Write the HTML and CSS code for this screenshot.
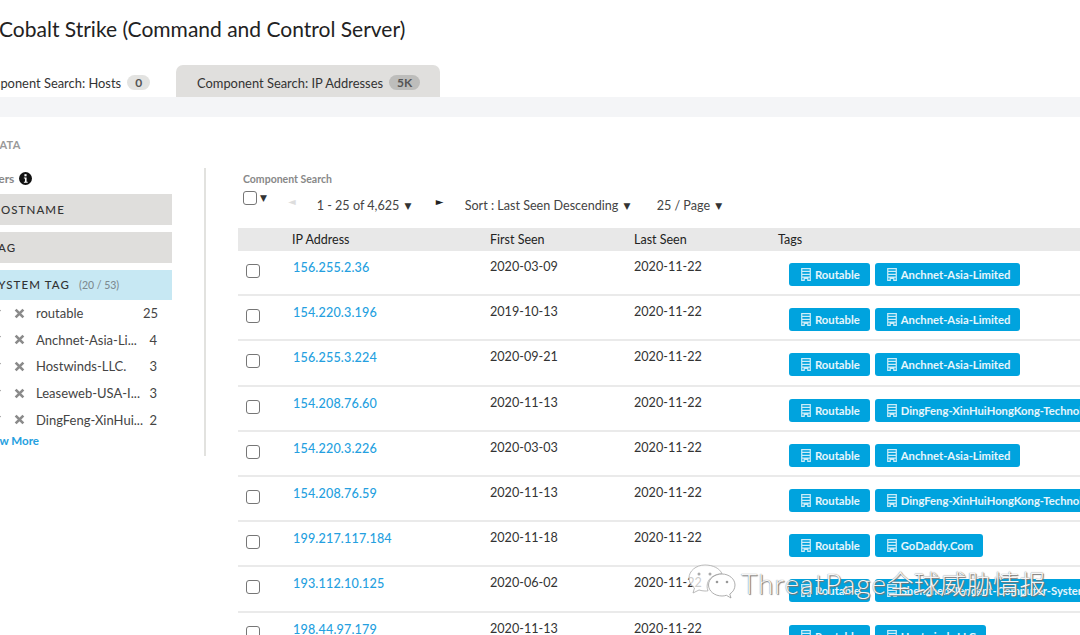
FILE: index.html
```html
<!DOCTYPE html>
<html lang="en">
<head>
    <meta charset="UTF-8">
    <title>Cobalt Strike (Command and Control Server)</title>
    <link rel="stylesheet" href="styles.css">
</head>
<body>
    <svg class="defs" width="0" height="0">
        <symbol id="building" viewBox="0 0 12 16">
            <path fill="#fff" fill-opacity=".8" fill-rule="evenodd" d="M0 0h12v16H7.500v-2.500h-3V16H0zM1.500 1.500v2h9v-2zM1.500 5v2h9V5zM1.500 8.500v2h9v-2zM1.500 12v2.500h1.500V12zM9 12v2.500h1.500V12z"/>
        </symbol>
        <symbol id="cross" viewBox="0 0 10 10">
            <path d="M1.500 1.500l7 7M8.500 1.500l-7 7" stroke="#8b8b8b" stroke-width="2.400"/>
        </symbol>
        <symbol id="check" viewBox="0 0 10 10">
            <path d="M1 5l3 3 5-7" stroke="#777" stroke-width="2" fill="none"/>
        </symbol>
    </svg>

    <div class="page">
        <h1>Cobalt Strike (Command and Control Server)</h1>

        <div class="tabs">
            <div class="tab">Component Search: Hosts <span class="badge">0</span></div>
            <div class="tab active">Component Search: IP Addresses <span class="badge">5K</span></div>
        </div>
        <div class="band"></div>

        <div class="section-title">DATA</div>

        <div class="content">
            <aside class="sidebar">
                <div class="filters-title">Filters
                    <svg class="info" viewBox="0 0 12 12" width="13" height="13">
                        <circle cx="6" cy="6" r="6" fill="#111"/>
                        <rect x="5" y="2" width="2" height="2" fill="#fff"/>
                        <path d="M4.500 5h2.500v4h1v1H4.500V9h1V6h-1z" fill="#fff"/>
                    </svg>
                </div>
                <div class="filter">HOSTNAME</div>
                <div class="filter">TAG</div>
                <div class="filter open">SYSTEM TAG <small>(20 / 53)</small></div>
                <ul class="facets">
                    <li><svg class="tick"><use href="#check"/></svg><svg class="x"><use href="#cross"/></svg><span class="name">routable</span><span class="num">25</span></li>
                    <li><svg class="tick"><use href="#check"/></svg><svg class="x"><use href="#cross"/></svg><span class="name">Anchnet-Asia-Li...</span><span class="num">4</span></li>
                    <li><svg class="tick"><use href="#check"/></svg><svg class="x"><use href="#cross"/></svg><span class="name">Hostwinds-LLC.</span><span class="num">3</span></li>
                    <li><svg class="tick"><use href="#check"/></svg><svg class="x"><use href="#cross"/></svg><span class="name">Leaseweb-USA-I...</span><span class="num">3</span></li>
                    <li><svg class="tick"><use href="#check"/></svg><svg class="x"><use href="#cross"/></svg><span class="name">DingFeng-XinHui...</span><span class="num">2</span></li>
                </ul>
                <a class="more">Show More</a>
            </aside>

            <main class="results">
                <div class="results-label">Component Search</div>
                <div class="toolbar">
                    <span class="select-all"><span class="box"></span><span class="caret">▼</span></span>
                    <span class="arrow prev">◄</span>
                    <span class="paging">1 - 25 of 4,625 <span class="caret">▼</span></span>
                    <span class="arrow next">►</span>
                    <span class="sort">Sort : Last Seen Descending <span class="caret">▼</span></span>
                    <span class="per-page">25 / Page <span class="caret">▼</span></span>
                </div>

                <div class="row head">
                    <span></span><span>IP Address</span><span>First Seen</span><span>Last Seen</span><span>Tags</span>
                </div>
                <div class="row">
                    <span class="box"></span><a>156.255.2.36</a><span>2020-03-09</span><span>2020-11-22</span>
                    <div class="tags"><span class="tag"><svg><use href="#building"/></svg>Routable</span><span class="tag"><svg><use href="#building"/></svg>Anchnet-Asia-Limited</span></div>
                </div>
                <div class="row">
                    <span class="box"></span><a>154.220.3.196</a><span>2019-10-13</span><span>2020-11-22</span>
                    <div class="tags"><span class="tag"><svg><use href="#building"/></svg>Routable</span><span class="tag"><svg><use href="#building"/></svg>Anchnet-Asia-Limited</span></div>
                </div>
                <div class="row">
                    <span class="box"></span><a>156.255.3.224</a><span>2020-09-21</span><span>2020-11-22</span>
                    <div class="tags"><span class="tag"><svg><use href="#building"/></svg>Routable</span><span class="tag"><svg><use href="#building"/></svg>Anchnet-Asia-Limited</span></div>
                </div>
                <div class="row">
                    <span class="box"></span><a>154.208.76.60</a><span>2020-11-13</span><span>2020-11-22</span>
                    <div class="tags"><span class="tag"><svg><use href="#building"/></svg>Routable</span><span class="tag"><svg><use href="#building"/></svg>DingFeng-XinHuiHongKong-Technology</span></div>
                </div>
                <div class="row">
                    <span class="box"></span><a>154.220.3.226</a><span>2020-03-03</span><span>2020-11-22</span>
                    <div class="tags"><span class="tag"><svg><use href="#building"/></svg>Routable</span><span class="tag"><svg><use href="#building"/></svg>Anchnet-Asia-Limited</span></div>
                </div>
                <div class="row">
                    <span class="box"></span><a>154.208.76.59</a><span>2020-11-13</span><span>2020-11-22</span>
                    <div class="tags"><span class="tag"><svg><use href="#building"/></svg>Routable</span><span class="tag"><svg><use href="#building"/></svg>DingFeng-XinHuiHongKong-Technology</span></div>
                </div>
                <div class="row">
                    <span class="box"></span><a>199.217.117.184</a><span>2020-11-18</span><span>2020-11-22</span>
                    <div class="tags"><span class="tag"><svg><use href="#building"/></svg>Routable</span><span class="tag"><svg><use href="#building"/></svg>GoDaddy.Com</span></div>
                </div>
                <div class="row">
                    <span class="box"></span><a>193.112.10.125</a><span>2020-06-02</span><span>2020-11-22</span>
                    <div class="tags"><span class="tag"><svg><use href="#building"/></svg>Routable</span><span class="tag"><svg><use href="#building"/></svg>Shenzhen-Tencent-Computer-Systems</span></div>
                </div>
                <div class="row">
                    <span class="box"></span><a>198.44.97.179</a><span>2020-11-13</span><span>2020-11-22</span>
                    <div class="tags"><span class="tag"><svg><use href="#building"/></svg>Routable</span><span class="tag"><svg><use href="#building"/></svg>Hostwinds.LLC</span></div>
                </div>
            </main>
        </div>
    </div>

    <div class="watermark">
        <svg viewBox="0 0 48 40" width="48" height="40">
            <path d="M17 1C8 1 1 7 1 14c0 4 2 7.500 5.500 10L5 29l6-3c2 .6 4 1 6 1 1 0 2 0 3-.2-.6-1.500-.9-3-.9-4.600 0-7 6.500-12.400 14.900-12.400C32 4.500 25 1 17 1z" fill="#fff" fill-opacity=".75" stroke="#aaa" stroke-width=".8"/>
            <path d="M34 10c-7.500 0-13.500 5-13.500 11S26.500 32 34 32c1.500 0 3-.2 4.400-.7L43 34l-1.200-4c3.300-2 5.200-5.200 5.200-9 0-6-5.900-11-13-11z" fill="#fff" fill-opacity=".9" stroke="#999" stroke-width=".8"/>
            <circle cx="11" cy="10" r="1.500" fill="#aaa"/><circle cx="22" cy="10" r="1.500" fill="#aaa"/>
            <circle cx="29" cy="18" r="1.300" fill="#999"/><circle cx="39" cy="18" r="1.300" fill="#999"/>
        </svg>
        <span class="wm-text"><span class="wm-latin">ThreatPage</span>全球威胁情报</span>
    </div>
</body>
</html>
```

FILE: styles.css
```css
html, body {
    margin: 0;
    height: 100%;
    overflow: hidden;
}
body {
    position: relative;
    font-family: Lato, "Noto Sans CJK SC", sans-serif;
    font-size: 12.600px;
    color: #333;
    background-color: #fff;
}
a {
    color: #259fe0;
    text-decoration: none;
}
.defs {
    display: block;
}
.page {
    width: 1400px;
    margin-left: -40px;
}
h1 {
    margin: 0;
    padding: 16px 0 0 39px;
    height: 65px;
    box-sizing: border-box;
    font-size: 21px;
    line-height: 26px;
    font-weight: 400;
    color: #222;
}

/* tabs */
.tabs {
    display: flex;
    height: 32px;
    padding-left: 14px;
}
.tab {
    display: flex;
    align-items: center;
    gap: 6px;
    width: 202px;
    padding-top: 3px;
    box-sizing: border-box;
    font-size: 12.900px;
    color: #333;
}
.tab.active {
    width: 264px;
    padding-left: 21px;
    background-color: #e0dfdd;
    border-radius: 7px 7px 0 0;
}
.badge {
    padding: 0 8px;
    border-radius: 8px;
    background-color: #e3e3e1;
    font-size: 12px;
    font-weight: 700;
    line-height: 15px;
    color: #555;
}
.tab.active .badge {
    background-color: #bdbdbb;
}
.band {
    height: 20px;
    background-color: #f4f5f7;
}
.section-title {
    padding: 21px 0 0 31px;
    height: 30px;
    font-size: 11px;
    font-weight: 700;
    letter-spacing: .3px;
    line-height: 14px;
    color: #999;
}

/* left column */
.content {
    display: flex;
    align-items: flex-start;
}
.sidebar {
    width: 212px;
    height: 288px;
    box-sizing: content-box;
    padding-right: 32px;
    border-right: 2px solid #e2e2df;
}
.filters-title {
    display: flex;
    align-items: center;
    gap: 5px;
    height: 21px;
    padding: 0 0 5px 21px;
    font-size: 12px;
    font-weight: 700;
    color: #888;
}
.filter {
    height: 31px;
    margin-bottom: 7px;
    padding-left: 31px;
    background-color: #dfdedc;
    font-size: 11.500px;
    font-weight: 500;
    letter-spacing: 1.100px;
    line-height: 31px;
    color: #333;
}
.filter.open {
    height: 30px;
    margin-bottom: 0;
    line-height: 30px;
    background-color: #c7e8f3;
}
.filter small {
    margin-left: 5px;
    font-size: 10.500px;
    letter-spacing: 0;
    color: #7d8a90;
}
.facets {
    margin: 0;
    padding: 0;
    list-style: none;
}
.facets li {
    display: flex;
    align-items: center;
    height: 26.600px;
    font-size: 13px;
}
.tick {
    width: 9px;
    height: 9px;
    margin-left: 32px;
}
.x {
    width: 11px;
    height: 11px;
    margin-left: 13px;
}
.name {
    width: 107px;
    margin-left: 11px;
    color: #444;
    white-space: nowrap;
}
.num {
    width: 14px;
    text-align: right;
    color: #444;
}
.more {
    display: block;
    padding-left: 20px;
    font-weight: 700;
    line-height: 16px;
    font-size: 11.600px;
    color: #259fe0;
}

/* results */
.results {
    margin-left: 32px;
    width: 900px;
}
.results-label {
    padding: 5px 0 0 5px;
    height: 18px;
    font-size: 10.500px;
    font-weight: 700;
    line-height: 12px;
    color: #888;
}
.toolbar {
    display: flex;
    align-items: flex-start;
    height: 37px;
    padding-left: 5px;
    color: #444;
}
.select-all {
    display: flex;
    align-items: center;
    gap: 1px;
}
.caret {
    margin-left: 2px;
    font-family: "DejaVu Sans", sans-serif;
    font-size: 9px;
    vertical-align: 1px;
    color: #333;
}
.arrow {
    font-family: "DejaVu Sans", sans-serif;
    font-size: 10px;
    color: #222;
}
.prev {
    margin: 5px 0 0 21px;
    color: #ddd;
}
.paging {
    width: 119px;
    margin: 7px 0 0 21px;
}
.next {
    margin-top: 5px;
    width: 29px;
}
.sort {
    width: 192px;
    margin-top: 7px;
}
.per-page {
    margin-top: 7px;
}
.box {
    display: inline-block;
    box-sizing: border-box;
    width: 14px;
    height: 14px;
    border: 1px solid #767676;
    border-radius: 3px;
    background-color: #fff;
}
.row {
    display: grid;
    grid-template-columns: 54px 198px 144px 144px 1fr;
    align-items: start;
    height: 45.200px;
    box-sizing: border-box;
    border-bottom: 2px solid #eaeaea;
    white-space: nowrap;
    color: #333;
}
.row.head {
    height: 23px;
    border: 0;
    background-color: #e8e8e8;
    line-height: 23px;
    font-size: 12.500px;
    color: #222;
}
.row > .box {
    margin: 13px 0 0 8px;
}
.row > a {
    margin: 9px 0 0 1px;
    font-weight: 500;
    letter-spacing: .15px;
}
.row > span:not(.box) {
    margin-top: 8px;
}
.row.head > span:not(.box) {
    margin-top: 0;
}
.tags {
    display: flex;
    gap: 5px;
    padding: 12px 0 0 11px;
}
.tag {
    display: flex;
    align-items: center;
    gap: 4px;
    height: 23px;
    padding: 0 10px 0 12px;
    border-radius: 3px;
    background-color: #00a3de;
    font-size: 11.250px;
    font-weight: 700;
    color: #e6f6fc;
}
.tag svg {
    width: 10px;
    height: 13px;
}

/* image watermark over the table */
.watermark {
    position: absolute;
    left: 688px;
    top: 564px;
    display: flex;
    align-items: center;
    gap: 5px;
    font-family: Lato, "Noto Sans CJK SC", sans-serif;
    font-size: 26.500px;
    font-weight: 300;
    white-space: nowrap;
    color: rgba(255, 255, 255, .95);
    text-shadow: 0 0 1px #666, 1px 1px 1px #777;
}
.wm-text {
    position: relative;
    top: -2px;
}
.wm-latin {
    font-size: 28px;
    letter-spacing: 1px;
}
```
